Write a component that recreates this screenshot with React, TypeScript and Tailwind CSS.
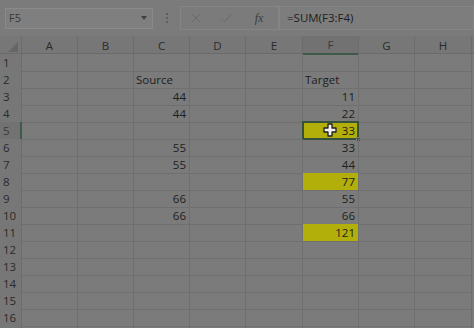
import React from "react";

const cols = ["A", "B", "C", "D", "E", "F", "G", "H"];

type Cell = { v?: string; left?: boolean; yellow?: boolean };
const data: Record<number, Record<string, Cell>> = {
  2: { C: { v: "Source", left: true }, F: { v: "Target", left: true } },
  3: { C: { v: "44" }, F: { v: "11" } },
  4: { C: { v: "44" }, F: { v: "22" } },
  5: { F: { v: "33", yellow: true } },
  6: { C: { v: "55" }, F: { v: "33" } },
  7: { C: { v: "55" }, F: { v: "44" } },
  8: { F: { v: "77", yellow: true } },
  9: { C: { v: "66" }, F: { v: "55" } },
  10: { C: { v: "66" }, F: { v: "66" } },
  11: { F: { v: "121", yellow: true } },
};

const gridCols = "grid grid-cols-[22px_56px_56px_56px_56px_57px_56px_56px_57px]";

export default function App() {
  const rows = Array.from({ length: 17 }, (_, i) => i + 1);
  return (
    <div className="w-[474px] h-[328px] overflow-hidden bg-[#7b7b7b] text-[#202020] font-['Open_Sans',sans-serif] relative">
      {/* formula bar */}
      <div className="h-[36px] flex items-center pl-[5px] gap-0">
        <div className="w-[148px] h-[21px] bg-[#7f7f7f] border border-[#8a8a8a] flex items-center justify-between pl-[3px] pr-[5px] text-[11px] text-[#3a3a3a]">
          <span>F5</span>
          <svg width="6" height="4" viewBox="0 0 6 4"><path d="M0 0h6L3 4z" fill="#3f3f3f" /></svg>
        </div>
        <div className="w-[27px] flex justify-center">
          <div className="flex flex-col gap-[2px]">
            <div className="w-[2px] h-[2px] bg-[#5f5f5f]" />
            <div className="w-[2px] h-[2px] bg-[#5f5f5f]" />
            <div className="w-[2px] h-[2px] bg-[#5f5f5f]" />
          </div>
        </div>
        <div className="w-[99px] h-[24px] border border-[#858585] flex items-center">
          <div className="w-[30px] flex justify-center">
            <svg width="10" height="10" viewBox="0 0 10 10"><path d="M1 1L9 9M9 1L1 9" stroke="#6a6a6a" strokeWidth="1" /></svg>
          </div>
          <div className="w-[30px] flex justify-center">
            <svg width="12" height="10" viewBox="0 0 12 10"><path d="M1 5.5L4.5 9L11 1" stroke="#6a6a6a" strokeWidth="1" fill="none" /></svg>
          </div>
          <div className="w-[36px] flex justify-center font-['Liberation_Serif',serif] italic text-[12px] text-[#3a3a3a]">fx</div>
        </div>
        <div className="flex-1 h-[24px] border border-[#858585] bg-[#7d7d7d] flex items-center pl-[7px] text-[11.5px] text-[#202020]">
          =SUM(F3:F4)
        </div>
      </div>

      {/* column header */}
      <div className={`${gridCols} h-[18px] bg-[#777777] border-b border-[#6a6a6a]`}>
        <div className="border-r border-[#6c6c6c] relative">
          <svg className="absolute right-[3px] bottom-[3px]" width="10" height="10" viewBox="0 0 10 10"><path d="M10 0V10H0z" fill="#666" /></svg>
        </div>
        {cols.map((c) => (
          <div
            key={c}
            className={`flex items-center justify-center text-[11.5px] border-r border-[#6c6c6c] ${
              c === "F" ? "bg-[#727272] border-b-2 border-b-[#3f5a48] text-[#3a3a3a]" : "text-[#2a2a2a]"
            }`}
          >
            {c}
          </div>
        ))}
      </div>

      {/* rows */}
      {rows.map((r) => (
        <div key={r} className={`${gridCols} h-[17px]`}>
          <div
            className={`flex items-center pl-[3px] text-[11.5px] border-b border-[#6c6c6c] ${
              r === 5 ? "bg-[#727272] border-r-2 border-r-[#3f5a48] text-[#3a3a3a]" : "bg-[#777777] border-r border-[#6a6a6a] text-[#2a2a2a]"
            }`}
          >
            {r <= 16 ? r : ""}
          </div>
          {cols.map((c) => {
            const cell = data[r]?.[c];
            const sel = r === 5 && c === "F";
            return (
              <div
                key={c}
                className={`relative flex items-center text-[11.5px] border-r border-b border-[#6f6f6f] ${
                  cell?.left ? "justify-start pl-[2px]" : "justify-end pr-[3px]"
                } ${cell?.yellow ? "bg-[#b2ae0a]" : ""}`}
              >
                {cell?.v}
                {sel && (
                  <>
                    <div className="absolute left-[-1px] top-[-1px] right-[-1px] bottom-[-1px] border-2 border-[#36513d]" />
                    <div className="absolute right-[-3px] bottom-[-3px] w-[5px] h-[5px] bg-[#36513d] border border-[#7b7b7b]" />
                    <svg className="absolute left-[20px] top-[1px]" width="14" height="14" viewBox="0 0 14 14">
                      <path
                        d="M5 1H9V5H13V9H9V13H5V9H1V5H5Z"
                        fill="#f2f2f2"
                        stroke="#1e1e1e"
                        strokeWidth="1.3"
                        strokeLinejoin="round"
                      />
                    </svg>
                  </>
                )}
              </div>
            );
          })}
        </div>
      ))}
    </div>
  );
}
